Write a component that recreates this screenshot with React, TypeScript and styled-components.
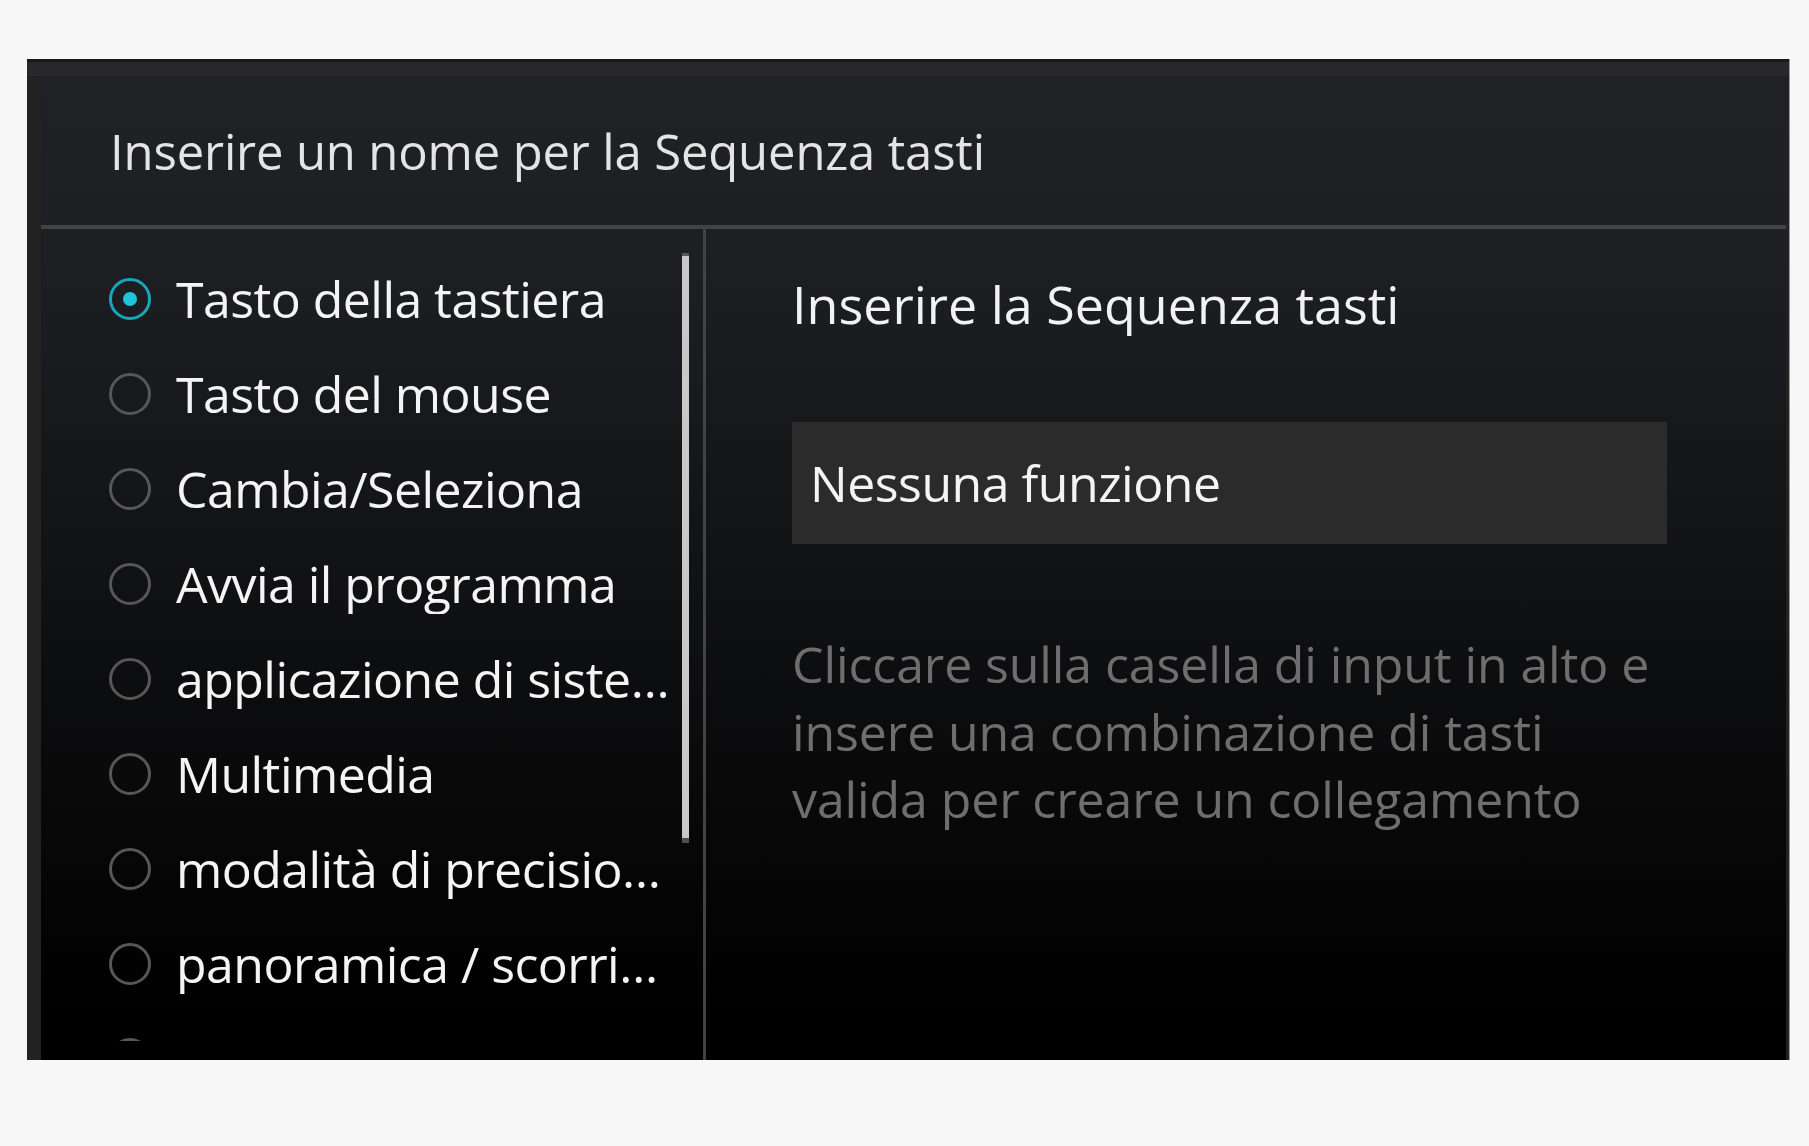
import styled, { createGlobalStyle } from 'styled-components';

const GlobalStyle = createGlobalStyle`
  html, body {
    margin: 0;
    padding: 0;
    background: #f7f7f7;
  }
  body {
    font-family: "Open Sans", "Noto Sans", sans-serif;
  }
`;

const StyledPage = styled.div`
  width: 1809px;
  height: 1146px;
  padding: 59px 0 0 27px;
  box-sizing: border-box;
`;

const StyledFrame = styled.div`
  width: 1762px;
  height: 1001px;
  display: flex;
  flex-direction: column;
  background: #222222;
  box-shadow: 1px 0 0 #9a9a9a;
`;

const StyledTitleBar = styled.div`
  height: 14px;
  flex-shrink: 0;
  background: #28282a;
  border-top: 3px solid #19191a;
`;

const StyledInner = styled.div`
  flex: 1;
  display: flex;
  flex-direction: column;
  min-height: 0;
  margin: 0 3px 0 14px;
  background: linear-gradient(180deg, #202124 0%, #1e1f22 18%, #000000 95%);
`;

const StyledHeader = styled.div`
  height: 149px;
  flex-shrink: 0;
  display: flex;
  align-items: center;
  padding-left: 69px;
  font-size: 49px;
  letter-spacing: -0.15px;
  color: #e4e4e4;
`;

const StyledSeparator = styled.div`
  height: 4px;
  flex-shrink: 0;
  background: #434343;
`;

const StyledBody = styled.div`
  flex: 1;
  display: flex;
  min-height: 0;
`;

const StyledLeft = styled.div`
  width: 662px;
  flex-shrink: 0;
  display: flex;
  box-sizing: border-box;
  padding: 22px 14px 19px 68px;
`;

const StyledList = styled.div`
  flex: 1;
  min-width: 0;
  margin-right: 10px;
  overflow: hidden;
`;

const StyledItem = styled.div`
  height: 95px;
  display: flex;
  align-items: center;
  gap: 25px;
`;

const StyledRadio = styled.span<{ $checked?: boolean }>`
  width: 42px;
  height: 42px;
  flex-shrink: 0;
  box-sizing: border-box;
  border-radius: 50%;
  border: 3px solid ${({ $checked }) => ($checked ? '#17a7bb' : '#575757')};
  display: flex;
  align-items: center;
  justify-content: center;

  &::after {
    content: '';
    width: 14px;
    height: 14px;
    border-radius: 50%;
    background: #1ec3da;
    display: ${({ $checked }) => ($checked ? 'block' : 'none')};
  }
`;

const StyledLabel = styled.span`
  flex: 1;
  min-width: 0;
  font-size: 50px;
  line-height: 60px;
  letter-spacing: -0.55px;
  color: #f4f4f4;
  white-space: nowrap;
  overflow: hidden;
  text-overflow: ellipsis;
`;

const StyledScrollTrack = styled.div`
  width: 7px;
  flex-shrink: 0;
`;

const StyledScrollThumb = styled.div`
  margin-top: 2px;
  height: 590px;
  box-sizing: border-box;
  background: #c8c8c8;
  border-top: 3px solid #555555;
  border-bottom: 5px solid #4e4e4e;
`;

const StyledDivider = styled.div`
  width: 3px;
  flex-shrink: 0;
  background: #434343;
`;

const StyledRight = styled.div`
  flex: 1;
  padding: 45px 0 0 86px;
`;

const StyledTitle = styled.div`
  font-size: 52px;
  line-height: 60px;
  color: #f2f2f2;
`;

const StyledInput = styled.div`
  width: 875px;
  height: 122px;
  margin-top: 88px;
  box-sizing: border-box;
  padding-left: 18px;
  display: flex;
  align-items: center;
  background: #2b2b2b;
  font-size: 50px;
  line-height: 60px;
  letter-spacing: -0.5px;
  color: #f4f4f4;
`;

const StyledHint = styled.div`
  margin-top: 87px;
  font-size: 50px;
  line-height: 67.5px;
  letter-spacing: -0.1px;
  color: #6e6e6e;

  span {
    display: block;
    white-space: nowrap;
  }
`;

const items = [
  'Tasto della tastiera',
  'Tasto del mouse',
  'Cambia/Seleziona',
  'Avvia il programma',
  'applicazione di sistema',
  'Multimedia',
  'modalità di precisione',
  'panoramica / scorrimento',
  'Disattivato',
];

const App = () => {
  return (
    <>
      <GlobalStyle />
      <StyledPage>
        <StyledFrame>
          <StyledTitleBar />
          <StyledInner>
            <StyledHeader>Inserire un nome per la Sequenza tasti</StyledHeader>
            <StyledSeparator />
            <StyledBody>
              <StyledLeft>
                <StyledList>
                  {items.map((label, i) => (
                    <StyledItem key={label}>
                      <StyledRadio $checked={i === 0} />
                      <StyledLabel>{label}</StyledLabel>
                    </StyledItem>
                  ))}
                </StyledList>
                <StyledScrollTrack>
                  <StyledScrollThumb />
                </StyledScrollTrack>
              </StyledLeft>
              <StyledDivider />
              <StyledRight>
                <StyledTitle>Inserire la Sequenza tasti</StyledTitle>
                <StyledInput>Nessuna funzione</StyledInput>
                <StyledHint>
                  <span>Cliccare sulla casella di input in alto e</span>
                  <span>insere una combinazione di tasti</span>
                  <span>valida per creare un collegamento</span>
                </StyledHint>
              </StyledRight>
            </StyledBody>
          </StyledInner>
        </StyledFrame>
      </StyledPage>
    </>
  );
};

export default App;
